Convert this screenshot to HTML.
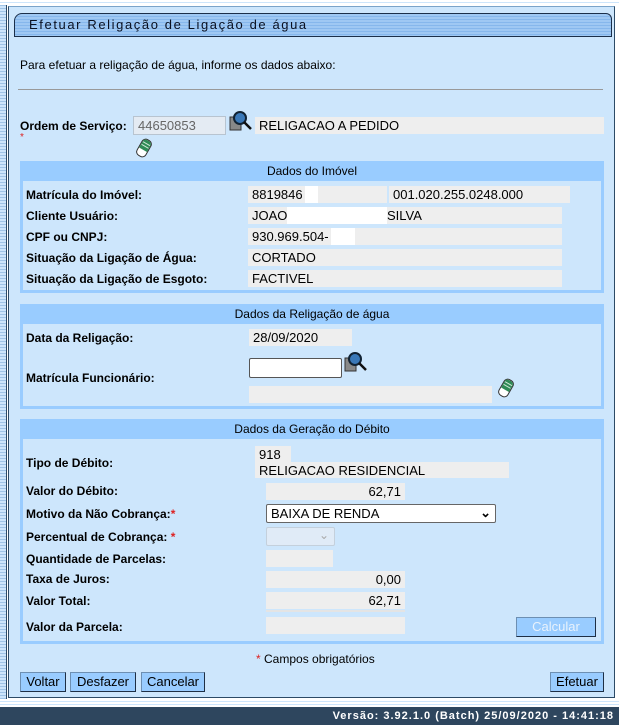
<!DOCTYPE html>
<html><head><meta charset="utf-8"><style>
*{margin:0;padding:0;box-sizing:border-box}
body{width:619px;height:725px;position:relative;overflow:hidden;background:#fff;font-family:"Liberation Sans",Arial,sans-serif;font-size:12px;color:#000}
.a{position:absolute}
.strip{left:0;top:0;width:7px;height:705px;background:repeating-linear-gradient(#cde5fb 0 2px,#9fc3e6 2px 3px);border-right:1px solid #2c4a66}
.panel{left:8px;top:6px;width:607px;height:692px;background:#cde6fc;border:1px solid #2c4a66;border-top-color:#7aa3c9}
.title{left:14px;top:13px;width:598px;height:24px;border:1px solid #1b2f4a;border-radius:8px 6px 0 0;background:repeating-linear-gradient(#9fc8f3 0 2px,#86b7ec 2px 3px);font-size:13px;letter-spacing:1.6px;padding:3px 0 0 14px;color:#0a1020}
.lbl{font-weight:bold;font-size:12px}
.f{background:#eeeeee;height:17px;padding:1px 4px;font-size:13px;line-height:15px;white-space:nowrap;overflow:hidden}
.w{background:#fff;height:17px}
.sec{left:20px;width:584px;border:3px solid #99ccff;border-top:0}
.sh{left:20px;width:584px;height:20px;background:#99ccff;text-align:center;font-size:12px;line-height:20px}
.btn{height:20px;background:#99ccff;border:1px solid #6d8fb2;border-right-color:#1e2f45;border-bottom-color:#1e2f45;font-size:13px;line-height:18px;text-align:center}
.r{text-align:right}
</style></head><body>
<div class="a strip"></div>
<div class="a" style="left:0;top:0;width:619px;height:5px;background:repeating-linear-gradient(#fff 0 2px,#cde5fb 2px 3px)"></div>
<div class="a panel"></div>
<div class="a title">Efetuar Religação de Ligação de água</div>
<div class="a" style="left:20px;top:58px">Para efetuar a religação de água, informe os dados abaixo:</div>
<div class="a" style="left:18px;top:89px;width:585px;height:1px;background:#999"></div>

<div class="a lbl" style="left:20px;top:119px">Ordem de Serviço:</div>
<div class="a" style="left:20px;top:132px;color:#d22;font-size:10px">*</div>
<div class="a" style="left:133px;top:116px;width:93px;height:19px;background:#e4ebf3;border:1px solid #b8c4d0;color:#666;font-size:13px;padding:1px 4px">44650853</div>
<svg class="a" style="left:229px;top:110px" width="24" height="22"><rect x="1" y="7" width="11" height="13" fill="#888" stroke="#333"/><circle cx="11" cy="8" r="6" fill="#3a78b8" stroke="#123" stroke-width="2"/><line x1="15" y1="12" x2="22" y2="19" stroke="#111" stroke-width="2.5"/></svg>
<div class="a f" style="left:255px;top:117px;width:349px">RELIGACAO A PEDIDO</div>
<svg class="a" style="left:134px;top:138px" width="20" height="20"><g transform="rotate(30 10 10)"><rect x="5" y="1" width="10" height="18" rx="4" fill="#fff" stroke="#333"/><path d="M5.5 5 Q5.5 1.5 10 1.5 Q14.5 1.5 14.5 5 L14.5 12 L5.5 12 Z" fill="#2f8a56"/><line x1="6" y1="5" x2="14" y2="5" stroke="#cfe8d6"/><line x1="6" y1="8" x2="14" y2="8" stroke="#cfe8d6"/></g></svg>

<div class="a sh" style="top:161px">Dados do Imóvel</div>
<div class="a sec" style="top:181px;height:112px"></div>
<div class="a lbl" style="left:26px;top:188px">Matrícula do Imóvel:</div>
<div class="a lbl" style="left:26px;top:209px">Cliente Usuário:</div>
<div class="a lbl" style="left:26px;top:230px">CPF ou CNPJ:</div>
<div class="a lbl" style="left:26px;top:251px">Situação da Ligação de Água:</div>
<div class="a lbl" style="left:26px;top:272px">Situação da Ligação de Esgoto:</div>
<div class="a f" style="left:248px;top:186px;width:139px">8819846</div>
<div class="a w" style="left:305px;top:186px;width:13px"></div>
<div class="a f" style="left:389px;top:186px;width:181px">001.020.255.0248.000</div>
<div class="a f" style="left:248px;top:207px;width:314px">JOAO</div>
<div class="a w" style="left:287px;top:207px;width:100px"></div>
<div class="a" style="left:387px;top:208px;font-size:13px">SILVA</div>
<div class="a f" style="left:248px;top:228px;width:314px">930.969.504-</div>
<div class="a w" style="left:331px;top:228px;width:24px"></div>
<div class="a f" style="left:248px;top:249px;width:314px">CORTADO</div>
<div class="a f" style="left:248px;top:270px;width:314px">FACTIVEL</div>

<div class="a sh" style="top:304px">Dados da Religação de água</div>
<div class="a sec" style="top:324px;height:85px"></div>
<div class="a lbl" style="left:26px;top:331px">Data da Religação:</div>
<div class="a f" style="left:249px;top:329px;width:103px">28/09/2020</div>
<div class="a lbl" style="left:26px;top:371px">Matrícula Funcionário:</div>
<div class="a" style="left:249px;top:358px;width:93px;height:20px;background:#fff;border:1px solid #555;border-radius:2px"></div>
<svg class="a" style="left:344px;top:351px" width="24" height="22"><rect x="1" y="7" width="11" height="13" fill="#888" stroke="#333"/><circle cx="11" cy="8" r="6" fill="#3a78b8" stroke="#123" stroke-width="2"/><line x1="15" y1="12" x2="22" y2="19" stroke="#111" stroke-width="2.5"/></svg>
<div class="a f" style="left:249px;top:386px;width:243px"></div>
<svg class="a" style="left:496px;top:378px" width="20" height="20"><g transform="rotate(30 10 10)"><rect x="5" y="1" width="10" height="18" rx="4" fill="#fff" stroke="#333"/><path d="M5.5 5 Q5.5 1.5 10 1.5 Q14.5 1.5 14.5 5 L14.5 12 L5.5 12 Z" fill="#2f8a56"/><line x1="6" y1="5" x2="14" y2="5" stroke="#cfe8d6"/><line x1="6" y1="8" x2="14" y2="8" stroke="#cfe8d6"/></g></svg>

<div class="a sh" style="top:419px">Dados da Geração do Débito</div>
<div class="a sec" style="top:439px;height:205px"></div>
<div class="a lbl" style="left:26px;top:456px">Tipo de Débito:</div>
<div class="a f" style="left:255px;top:446px;width:36px;height:16px">918</div>
<div class="a f" style="left:255px;top:462px;width:254px;height:16px">RELIGACAO RESIDENCIAL</div>
<div class="a lbl" style="left:26px;top:484px">Valor do Débito:</div>
<div class="a f r" style="left:266px;top:483px;width:139px">62,71</div>
<div class="a lbl" style="left:26px;top:507px;font-weight:bold">Motivo da Não Cobrança:<span style="color:#d22">*</span></div>
<div class="a" style="left:266px;top:504px;width:230px;height:19px;background:#fff;border:1px solid #666;border-radius:2px;font-size:13px;padding:1px 4px">BAIXA DE RENDA<span style="position:absolute;right:4px;top:0;font-weight:bold">&#8964;</span></div>
<div class="a lbl" style="left:26px;top:530px">Percentual de Cobrança: <span style="color:#d22">*</span></div>
<div class="a" style="left:266px;top:527px;width:69px;height:19px;background:#e0ebf7;border:1px solid #c4d0dc;border-radius:2px"><span style="position:absolute;right:5px;top:0;color:#aaa">&#8964;</span></div>
<div class="a lbl" style="left:26px;top:552px">Quantidade de Parcelas:</div>
<div class="a f" style="left:266px;top:550px;width:67px"></div>
<div class="a lbl" style="left:26px;top:572px">Taxa de Juros:</div>
<div class="a f r" style="left:266px;top:571px;width:139px">0,00</div>
<div class="a lbl" style="left:26px;top:594px">Valor Total:</div>
<div class="a f r" style="left:266px;top:592px;width:139px">62,71</div>
<div class="a" style="left:266px;top:610px;width:139px;height:2px;background:#e4e4e4"></div>
<div class="a lbl" style="left:26px;top:620px">Valor da Parcela:</div>
<div class="a f" style="left:266px;top:617px;width:139px"></div>
<div class="a btn" style="left:516px;top:617px;width:80px;color:#e8f2fc">Calcular</div>

<div class="a" style="left:256px;top:652px"><span style="color:#d22">*</span> Campos obrigatórios</div>
<div class="a btn" style="left:20px;top:672px;width:46px">Voltar</div>
<div class="a btn" style="left:70px;top:672px;width:66px">Desfazer</div>
<div class="a btn" style="left:141px;top:672px;width:64px">Cancelar</div>
<div class="a btn" style="left:550px;top:672px;width:54px">Efetuar</div>

<div class="a" style="left:0;top:699px;width:619px;height:8px;background:repeating-linear-gradient(#fff 0 2px,#cde5fb 2px 3px)"></div>
<div class="a" style="left:0;top:707px;width:619px;height:18px;background:#2e465e;color:#fff;font-weight:bold;font-size:11px;letter-spacing:1px;text-align:right;padding:3px 5px 0 0">Versão: 3.92.1.0 (Batch) 25/09/2020 - 14:41:18</div>
</body></html>
